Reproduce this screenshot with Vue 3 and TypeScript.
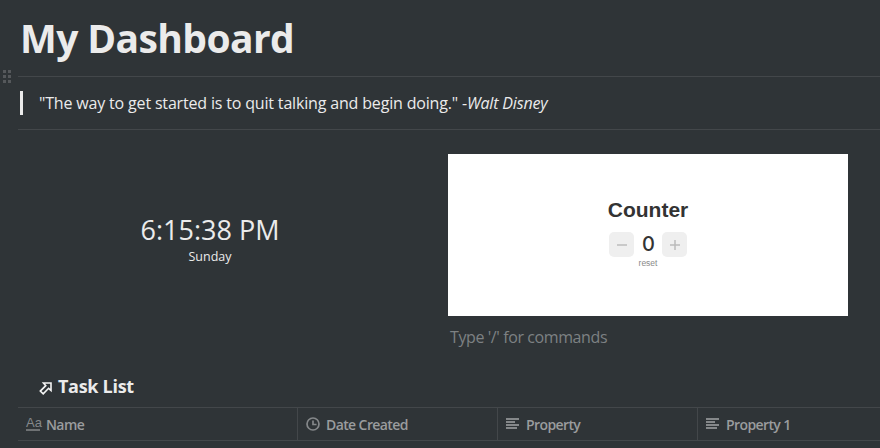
<script setup lang="ts">
const columns = [
  { name: 'Name', icon: 'text', width: 280 },
  { name: 'Date Created', icon: 'clock', width: 200 },
  { name: 'Property', icon: 'lines', width: 200 },
  { name: 'Property 1', icon: 'lines', width: 200 },
]
</script>

<template>
  <div class="page">
    <h1 class="title">My Dashboard</h1>

    <div class="rule-row">
      <span class="grip"><i v-for="n in 6" :key="n"></i></span>
    </div>

    <blockquote class="quote">
      <span>"The way to get started is to quit talking and begin doing." -<em>Walt Disney</em></span>
    </blockquote>

    <div class="widgets">
      <div class="clock">
        <div class="time">6:15:38 PM</div>
        <div class="day">Sunday</div>
      </div>
      <div class="right">
        <div class="counter">
          <div class="counter-title">Counter</div>
          <div class="counter-row">
            <button class="step"><svg width="12" height="12" viewBox="0 0 12 12"><path d="M1 6h10" stroke="#bcbcbc" stroke-width="1.5" /></svg></button>
            <span class="count">0</span>
            <button class="step"><svg width="12" height="12" viewBox="0 0 12 12"><path d="M1 6h10M6 1v10" stroke="#bcbcbc" stroke-width="1.5" /></svg></button>
          </div>
          <div class="reset">reset</div>
        </div>
        <div class="placeholder">Type '/' for commands</div>
      </div>
    </div>

    <div class="list-title">
      <svg class="link-arrow" width="13" height="13" viewBox="0 0 13 13" fill="none" stroke="#f4f4f4" stroke-width="1.6">
        <path d="M4.5 1h7.5v7.5l-2.4-2.2-5.4 5.6-2.9-2.8 5.5-5.5z" />
      </svg>
      <span>Task List</span>
    </div>

    <div class="table-head">
      <div v-for="col in columns" :key="col.name" class="cell" :style="{ width: col.width + 'px' }">
        <span v-if="col.icon === 'text'" class="aa">Aa</span>
        <svg v-else-if="col.icon === 'clock'" width="14" height="14" viewBox="0 0 14 14" fill="none" stroke="#85888a" stroke-width="1.7">
          <circle cx="7" cy="7" r="6" />
          <path d="M7 3.5V7.5H10.5" />
        </svg>
        <svg v-else width="14" height="14" viewBox="0 0 14 14" fill="#85888a">
          <rect x="0" y="1" width="13" height="2" />
          <rect x="0" y="4" width="9" height="2" />
          <rect x="0" y="7" width="13" height="2" />
          <rect x="0" y="10" width="11" height="2" />
        </svg>
        <span>{{ col.name }}</span>
      </div>
    </div>
  </div>
</template>

<style>
html, body {
  margin: 0;
  background: #2f3437;
}
</style>

<style scoped>
.page {
  width: 880px;
  height: 448px;
  overflow: hidden;
  background: #2f3437;
  color: #ebebeb;
  font-family: "Open Sans", "Noto Sans", sans-serif;
  padding-left: 18px;
  box-sizing: border-box;
}

.title {
  margin: 0;
  height: 76px;
  padding-left: 2px;
  font-size: 39px;
  line-height: 76px;
  font-weight: 700;
  letter-spacing: -0.6px;
  box-sizing: border-box;
}

.rule-row {
  position: relative;
  height: 1px;
  background: #43474a;
}

.grip {
  position: absolute;
  left: -15px;
  top: -6px;
  display: grid;
  grid-template-columns: 3px 3px;
  gap: 2px;
}

.grip i {
  width: 3px;
  height: 3px;
  background: #55585b;
}

.quote {
  margin: 0;
  height: 52px;
  display: flex;
  align-items: center;
  padding-left: 2px;
  border-bottom: 1px solid #43474a;
  box-sizing: content-box;
  font-size: 16px;
}

.quote span {
  display: block;
  height: 24px;
  line-height: 25px;
  border-left: 3px solid #ebebeb;
  padding-left: 16px;
  letter-spacing: -0.17px;
}

.widgets {
  display: flex;
  padding-top: 24px;
}

.clock {
  width: 384px;
  height: 162px;
  padding-top: 57px;
  box-sizing: border-box;
  text-align: center;
}

.time {
  font-size: 27px;
  line-height: 38px;
}

.day {
  font-size: 12.5px;
  line-height: 16px;
}

.right {
  margin-left: 46px;
  width: 400px;
}

.counter {
  height: 162px;
  background: #fff;
  color: #333;
  font-family: "Liberation Sans", Arial, sans-serif;
  text-align: center;
  padding-top: 44px;
  box-sizing: border-box;
}

.counter-title {
  font-size: 21px;
  font-weight: 700;
  line-height: 24px;
}

.counter-row {
  display: flex;
  align-items: center;
  justify-content: center;
  gap: 8px;
  margin-top: 10px;
}

.step {
  width: 25px;
  height: 25px;
  border: 0;
  border-radius: 5px;
  background: #efefef;
  padding: 0;
  display: flex;
  align-items: center;
  justify-content: center;
}

.count {
  font-family: Inter, "Liberation Sans", sans-serif;
  font-size: 20px;
  line-height: 25px;
  font-weight: 500;
  width: 12px;
}

.reset {
  font-size: 8.5px;
  line-height: 9px;
  margin-top: 2px;
  color: #8a8a8a;
}

.placeholder {
  margin-top: 9px;
  padding-left: 2px;
  font-size: 16px;
  line-height: 24px;
  letter-spacing: -0.4px;
  color: #7d8183;
}

.list-title {
  margin-top: 14px;
  height: 45px;
  display: flex;
  align-items: center;
  padding-left: 21px;
  padding-top: 1px;
  gap: 6px;
  font-size: 18px;
  font-weight: 700;
  box-sizing: border-box;
  border-bottom: 1px solid #43474a;
  letter-spacing: -0.3px;
}

.link-arrow {
  margin-top: 6px;
}

.table-head {
  display: flex;
  height: 33px;
  border-bottom: 1px solid #43474a;
  width: 880px;
  box-sizing: border-box;
}

.cell {
  flex: none;
  display: flex;
  align-items: center;
  gap: 6px;
  padding-left: 8px;
  box-sizing: border-box;
  border-right: 1px solid #43474a;
  font-size: 14px;
  font-weight: 600;
  color: #9a9c9e;
  letter-spacing: -0.6px;
}

.aa {
  width: 14px;
  font-family: "Liberation Sans", Arial, sans-serif;
  font-size: 13px;
  font-weight: 400;
  line-height: 12px;
  color: #85888a;
  border-bottom: 2px solid #6f7274;
  letter-spacing: 0;
  white-space: nowrap;
}
</style>
